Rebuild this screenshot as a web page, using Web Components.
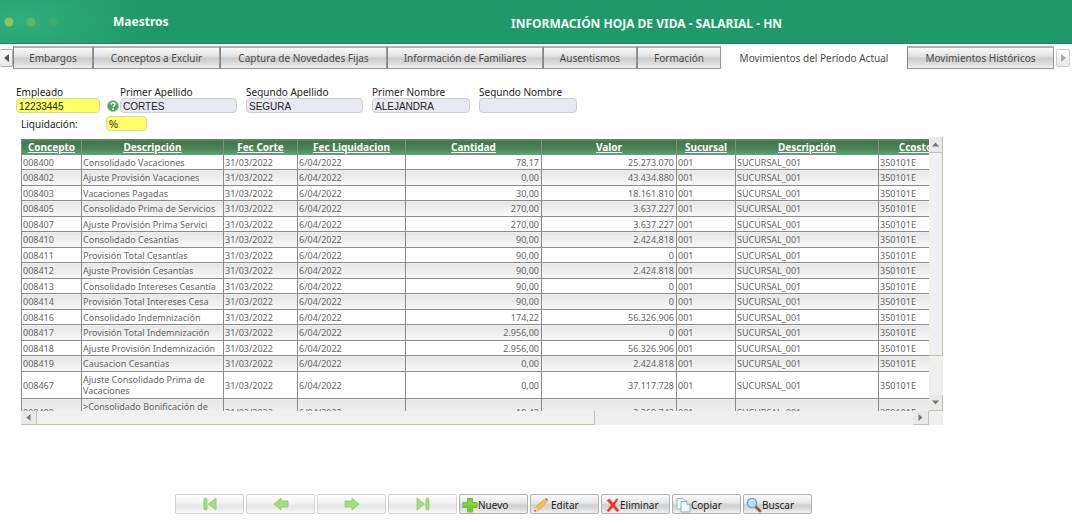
<!DOCTYPE html>
<html lang="es">
<head>
<meta charset="utf-8">
<title>Información Hoja de Vida - Salarial - HN</title>
<style>
  body { margin: 0; background: #fff; font-family: "Noto Sans", sans-serif; font-size: 10px; line-height: 12px; color: #222; }
</style>
</head>
<body>
<hr-page></hr-page>

<script>
function define(name, html, setup) {
  const tpl = document.createElement('template');
  tpl.innerHTML = html;
  customElements.define(name, class extends HTMLElement {
    constructor() {
      super();
      this.attachShadow({ mode: 'open' }).append(tpl.content.cloneNode(true));
    }
    connectedCallback() { if (setup) setup(this.shadowRoot, this); }
  });
}

/* Banner with the module name and the screen title */
define('hr-banner', `
<style>
  :host { display: grid; grid-template-columns: 113px 1fr; align-items: center; height: 44px; box-sizing: border-box; border-bottom: 1px solid #178a5c;
    background: radial-gradient(ellipse 130px 60px at 20px 20px, #31ad7e, #27a172 60%, #1f996a 100%); color: #fff; font-weight: bold; font-size: 12px; line-height: 16px; }
  svg { display: block; width: 70px; height: 12px; }
  .texts { display: flex; height: 100%; align-items: center; color: #f4fbf7; }
  .module { flex: 0 0 398px; }
  h1 { margin: 0; font: inherit; padding-top: 4px; white-space: nowrap; }
</style>
<svg viewBox="0 0 70 12" aria-hidden="true"><circle cx="9" cy="6" r="4.5" fill="#8ac65c"/><circle cx="31" cy="6" r="4.5" fill="#5cb865"/><circle cx="53" cy="6" r="4.5" fill="#3bab70"/></svg>
<div class="texts"><span class="module">Maestros</span><h1><slot></slot></h1></div>`);

/* Single tab; the selected one has no frame */
define('hr-tab', `
<style>
  :host { display: block; }
  button { display: block; width: 100%; height: 23px; margin: 0; padding: 0; border: 1px solid #969696; border-width: 2px 1px 1px 1px; border-top-color: #b5b0b2; border-left-color: #858585; font: inherit; color: #4a4a4a; white-space: nowrap;
    background: linear-gradient(#fafafa, #dedede 45%, #cbcbcb 50%, #dadada 75%, #f2f2f2); }
  :host([selected]) button { background: #fff; border-color: transparent; }
</style>
<button type="button" role="tab"><slot></slot></button>`, (r, el) => {
  r.querySelector('button').setAttribute('aria-selected', el.hasAttribute('selected'));
});

define('hr-tabs', `
<style>
  :host { display: flex; align-items: center; height: 23px; margin-top: 2px; overflow: hidden; }
  .list { display: flex; flex: 1; min-width: 0; }
  .list ::slotted(*) { flex: 0 0 auto; }
  .scroll { flex: 0 0 13px; height: 18px; padding: 0; border: 1px solid #a9a9a9; border-radius: 2px; background: linear-gradient(#fff, #e6e6e6); display: grid; place-items: center; }
  .prev { border-left: 0; }
  .next { flex-basis: 14px; margin: 0 2px 0 1px; border-color: #cfcfcf; }
  svg { display: block; width: 5px; height: 8px; }
</style>
<button class="scroll prev" type="button" aria-label="Anterior"><svg viewBox="0 0 5 8"><path d="M5 0v8L0 4z" fill="#555"/></svg></button>
<div class="list" role="tablist"><slot></slot></div>
<button class="scroll next" type="button" aria-label="Siguiente"><svg viewBox="0 0 5 8"><path d="M0 0v8l5-4z" fill="#aaa"/></svg></button>`);

/* Labelled text box */
define('hr-field', `
<style>
  :host { display: flex; flex-direction: column; }
  :host([inline]) { flex-direction: row; align-items: center; }
  :host([inline]) label { flex: 0 0 85px; }
  label { line-height: 12px; white-space: nowrap; }
  input { box-sizing: border-box; width: 100%; height: 15px; margin: 0; padding: 1px 2px 0; border: 1px solid #cfcfd6; border-radius: 4px; background: #e8e8f2; font: 10px "Liberation Sans", sans-serif; color: #222; }
  :host([key]) input { background: #ffff66; border-color: #d6d6a4; }
</style>
<label for="box"></label><input id="box" type="text">`, (r, el) => {
  r.querySelector('label').textContent = el.getAttribute('label');
  r.querySelector('input').value = el.getAttribute('value') || '';
});

define('hr-employee', `
<style>
  :host { display: block; padding: 17px 16px 0; }
  .row { display: flex; align-items: flex-end; }
  hr-field { flex: 0 0 auto; }
  .w84 { width: 84px; } .w117 { width: 117px; } .w98 { width: 98px; }
  .gap { margin-right: 9px; }
  .help { flex: 0 0 12px; width: 12px; height: 15px; margin: 0 1px 0 7px; padding: 0; border: 0; background: none; display: grid; place-items: center; }
  .help svg { width: 12px; height: 12px; }
  .liq { margin: 3px 0 0 5px; width: 126px; }
</style>
<div class="row">
  <hr-field class="w84" key label="Empleado" value="12233445"></hr-field>
  <button class="help" type="button" aria-label="Buscar empleado"><svg viewBox="0 0 12 12"><circle cx="6" cy="6" r="5.6" fill="#4e9c66" stroke="#a9cdb4" stroke-width=".8"/><path d="M2 4.5a4.5 4.5 0 0 1 8 0C8 3 4 3 2 4.500z" fill="#a7d4b4"/><path d="M4.200 4.700c0-2.400 3.700-2.300 3.700-.2 0 1.300-1.800 1.300-1.800 2.600" fill="none" stroke="#fff" stroke-width="1.300"/><circle cx="6.100" cy="9" r=".9" fill="#fff"/></svg></button>
  <hr-field class="w117 gap" label="Primer Apellido" value="CORTES"></hr-field>
  <hr-field class="w117 gap" label="Segundo Apellido" value="SEGURA"></hr-field>
  <hr-field class="w98 gap" label="Primer Nombre" value="ALEJANDRA"></hr-field>
  <hr-field class="w98" label="Segundo Nombre"></hr-field>
</div>
<hr-field class="liq" inline key label="Liquidación:" value="%"></hr-field>`);

/* Movement rows: code, description, quantity, value */
const ROWS = [
  ['008400', 'Consolidado Vacaciones', '78,17', '25.273.070'],
  ['008402', 'Ajuste Provisión Vacaciones', '0,00', '43.434.880'],
  ['008403', 'Vacaciones Pagadas', '30,00', '18.161.810'],
  ['008405', 'Consolidado Prima de Servicios', '270,00', '3.637.227'],
  ['008407', 'Ajuste Provisión Prima Servici', '270,00', '3.637.227'],
  ['008410', 'Consolidado Cesantías', '90,00', '2.424.818'],
  ['008411', 'Provisión Total Cesantías', '90,00', '0'],
  ['008412', 'Ajuste Provisión Cesantías', '90,00', '2.424.818'],
  ['008413', 'Consolidado Intereses Cesantía', '90,00', '0'],
  ['008414', 'Provisión Total Intereses Cesa', '90,00', '0'],
  ['008416', 'Consolidado Indemnización', '174,22', '56.326.906'],
  ['008417', 'Provisión Total Indemnización', '2.956,00', '0'],
  ['008418', 'Ajuste Provisión Indemnización', '2.956,00', '56.326.906'],
  ['008419', 'Causacion Cesantias', '0,00', '2.424.818'],
  ['008467', 'Ajuste Consolidado Prima de Vacaciones', '0,00', '37.117.728'],
  ['008480', '&gt;Consolidado Bonificación de Vacaciones', '19,43', '2.369.743']
];
const COLS = [['Concepto', 60], ['Descripción', 142], ['Fec Corte', 74], ['Fec Liquidacion', 108], ['Cantidad', 136], ['Valor', 135], ['Sucursal', 59], ['Descripción', 143], ['Ccosto', 74]];

define('hr-movements', `
<style>
  :host { display: block; }
  table { border-collapse: collapse; table-layout: fixed; width: 931px; font-size: 9px; line-height: 11px; color: #666; }
  th, td { border: 1px solid #8b8b8b; padding: 1px 2px 1px 1px; overflow: hidden; text-align: left; }
  tr { height: 15px; }
  tbody tr:nth-child(even) { height: 16px; }
  tbody tr:nth-child(even) td { background: linear-gradient(#e6e6e6, #f8f8f8); }
  tbody tr:nth-child(n+15) { height: 27px; }
  th { padding: 0; font-size: 10px; line-height: 14px; text-align: center; white-space: nowrap; background: linear-gradient(#47744b, #4a7f52 50%, #52a772); border-top-color: #6d7a6d; }
  th a { color: #fff; }
  .num { text-align: right; }
</style>
<table>
  <colgroup>${COLS.map(c => `<col style="width:${c[1]}px">`).join('')}</colgroup>
  <thead><tr>${COLS.map(c => `<th scope="col"><a href="#">${c[0]}</a></th>`).join('')}</tr></thead>
  <tbody>${ROWS.map(r => `<tr><td>${r[0]}</td><td>${r[1]}</td><td>31/03/2022</td><td>6/04/2022</td><td class="num">${r[2]}</td><td class="num">${r[3]}</td><td>001</td><td>SUCURSAL_001</td><td>350101E</td></tr>`).join('')}</tbody>
</table>`);

/* Scrollbar; "vertical" turns its axis */
define('hr-scrollbar', `
<style>
  :host { display: flex; background: #efefef; height: 14px; }
  :host([vertical]) { flex-direction: column; height: auto; width: 14px; }
  button { flex: 0 0 16px; padding: 0; border: 0 solid #bfc6b0; border-width: 0 1px 1px 0; background: #e9e9e9; display: grid; place-items: center; }
  .thumb { box-sizing: border-box; border: solid #bcc5a9; border-width: 0 1px 1px 0; background: #f0f0f0; }
  .thumb { flex: 7 0 0; }
  .rest { flex: 4 0 0; }
  :host([vertical]) .thumb { flex-grow: 21; }
  svg { display: block; width: 7px; height: 7px; }
  :host([vertical]) svg { transform: rotate(90deg); }
</style>
<button type="button" aria-label="Retroceder"><svg viewBox="0 0 7 7"><path d="M5.500 0v7L1.500 3.500z" fill="#777"/></svg></button>
<div class="thumb"></div><div class="rest"></div>
<button type="button" aria-label="Avanzar"><svg viewBox="0 0 7 7"><path d="M1.500 0v7l4-3.500z" fill="#777"/></svg></button>`);

define('hr-scroll-panel', `
<style>
  :host { display: grid; grid-template-columns: minmax(0, 1fr) 14px; grid-template-rows: 274px 14px; margin: 6px 0 0 21px; width: 86%; }
  .view { overflow: hidden; padding-top: 2px; }
  .corner { background: #efefef; }
</style>
<div class="view"><slot></slot></div>
<hr-scrollbar vertical></hr-scrollbar>
<hr-scrollbar></hr-scrollbar>
<div class="corner"></div>`);

const ICONS = {
  first: '<rect x="2" y="2" width="3" height="12" rx="1.500" fill="#a6dc80" stroke="#85c95c" stroke-width=".8"/><path d="M14 2v12L6.500 8z" fill="#a6dc80" stroke="#85c95c" stroke-width=".8" stroke-linejoin="round"/>',
  prev: '<path d="M1 8l7-6v3h7v6H8V14z" fill="#a6dc80" stroke="#8fcf68" stroke-width=".9" stroke-linejoin="round"/>',
  next: '<path d="M15 8L8 2v3H1v6h7V14z" fill="#a6dc80" stroke="#8fcf68" stroke-width=".9" stroke-linejoin="round"/>',
  last: '<rect x="11" y="2" width="3" height="12" rx="1.500" fill="#a6dc80" stroke="#85c95c" stroke-width=".8"/><path d="M2 2v12l7.500-6z" fill="#a6dc80" stroke="#85c95c" stroke-width=".8" stroke-linejoin="round"/>',
  add: '<path d="M5.500 1.500h5v4h4.500v5h-4.500v4.500h-5v-4.500H1v-5h4.500z" fill="#7cc735" stroke="#74bb3a" stroke-linejoin="round"/><path d="M6.500 2.500h3v4h4.500v1.500H2V6.500h4.500z" fill="#8fd24b"/>',
  edit: '<path d="M1.500 14.500l1.200-4.300L10.800 2.700l2.700 2.700-8.200 8z" fill="#f8c04a" stroke="#d99528" stroke-width=".7"/><path d="M1.500 14.500l1.200-4.300 2.600 3.200z" fill="#f3d6a8"/><path d="M1.500 14.500l.5-1.700 1.200 1.200z" fill="#555"/><path d="M10.800 2.700l1-1 2.700 2.700-1 1z" fill="#c9ccd0"/><path d="M11.800 1.700c1-1.300 4-.2 2.700 2.700z" fill="#e45a45"/>',
  remove: '<path d="M3 3.500L5.500 2l3.500 4.200L13 1.500l1 .8L10.500 8l4.500 5.500-2 1.200L9 9.800l-4.300 5-1.700-1L7.200 8z" fill="#f0322b" stroke="#d9302b" stroke-width=".4"/>',
  copy: '<path d="M2 1.500h6L10.500 4v8H2z" fill="#f5fafb" stroke="#9db4bb" stroke-width=".9"/><path d="M6 4.500h6l3 3V15H6z" fill="#f0fafa" stroke="#8ba8b0" stroke-width=".9"/><path d="M12 4.500v3h3" fill="#d3e7ea" stroke="#8ba8b0" stroke-width=".8"/>',
  find: '<path d="M9.500 9.500l4.500 4.500" stroke="#8d5a35" stroke-width="2.800" stroke-linecap="round"/><circle cx="6" cy="6" r="4.600" fill="#b5dcf7" stroke="#6ba3d0" stroke-width="1.400"/><path d="M3.200 5.500c.5-2.500 3.300-3 4.800-1.700-2 .1-3.400.6-4.800 1.700z" fill="#f4fbff"/>'
};

/* Toolbar button: icon alone, or icon and caption */
define('hr-action', `
<style>
  :host { display: block; width: 69px; }
  button { box-sizing: border-box; width: 100%; height: 20px; margin: 0; padding: 1px 0 0 2px; display: flex; align-items: center; border: 1px solid #b0b0b0; border-radius: 2px; font: inherit; color: #222; white-space: nowrap;
    background: linear-gradient(#fbfbfb, #e6e6e6 45%, #cfcfcf 55%, #dadada 75%, #f0f0f0); }
  :host([muted]) button { justify-content: center; padding: 0; border-color: #d2d2d2; background: linear-gradient(#fff, #f3f3f3 45%, #e6e6e6 55%, #ececec 75%, #f8f8f8); }
  svg { display: block; flex: 0 0 16px; height: 16px; }
  :host([spaced]) button { gap: 2px; }
</style>
<button type="button"><svg viewBox="0 0 16 16" aria-hidden="true"></svg><slot></slot></button>`, (r, el) => {
  r.querySelector('svg').innerHTML = ICONS[el.getAttribute('icon')];
  if (el.title) r.querySelector('button').setAttribute('aria-label', el.title);
});

define('hr-page', `
<style>
  :host { display: block; }
  .toolbar { display: flex; gap: 2px; margin: 69px 0 0; padding: 0 0 9px 175px; }
  .w80 { width: 80px; } .w127 { width: 127px; } .w167 { width: 167px; } .w156 { width: 156px; }
  .w94 { width: 94px; } .w84 { width: 84px; } .w186 { width: 186px; } .w147 { width: 147px; }
</style>
<header><hr-banner>INFORMACIÓN HOJA DE VIDA - SALARIAL - HN</hr-banner></header>
<hr-tabs>
  <hr-tab class="w80">Embargos</hr-tab>
  <hr-tab class="w127">Conceptos a Excluir</hr-tab>
  <hr-tab class="w167">Captura de Novedades Fijas</hr-tab>
  <hr-tab class="w156">Información de Familiares</hr-tab>
  <hr-tab class="w94">Ausentismos</hr-tab>
  <hr-tab class="w84">Formación</hr-tab>
  <hr-tab class="w186" selected>Movimientos del Período Actual</hr-tab>
  <hr-tab class="w147">Movimientos Históricos</hr-tab>
</hr-tabs>
<main>
  <hr-employee></hr-employee>
  <hr-scroll-panel><hr-movements></hr-movements></hr-scroll-panel>
</main>
<footer class="toolbar">
  <hr-action muted icon="first" title="Primero"></hr-action>
  <hr-action muted icon="prev" title="Anterior"></hr-action>
  <hr-action muted icon="next" title="Siguiente"></hr-action>
  <hr-action muted icon="last" title="Último"></hr-action>
  <hr-action icon="add">Nuevo</hr-action>
  <hr-action spaced icon="edit">Editar</hr-action>
  <hr-action icon="remove">Eliminar</hr-action>
  <hr-action icon="copy">Copiar</hr-action>
  <hr-action icon="find">Buscar</hr-action>
</footer>`);
</script>
</body>
</html>
